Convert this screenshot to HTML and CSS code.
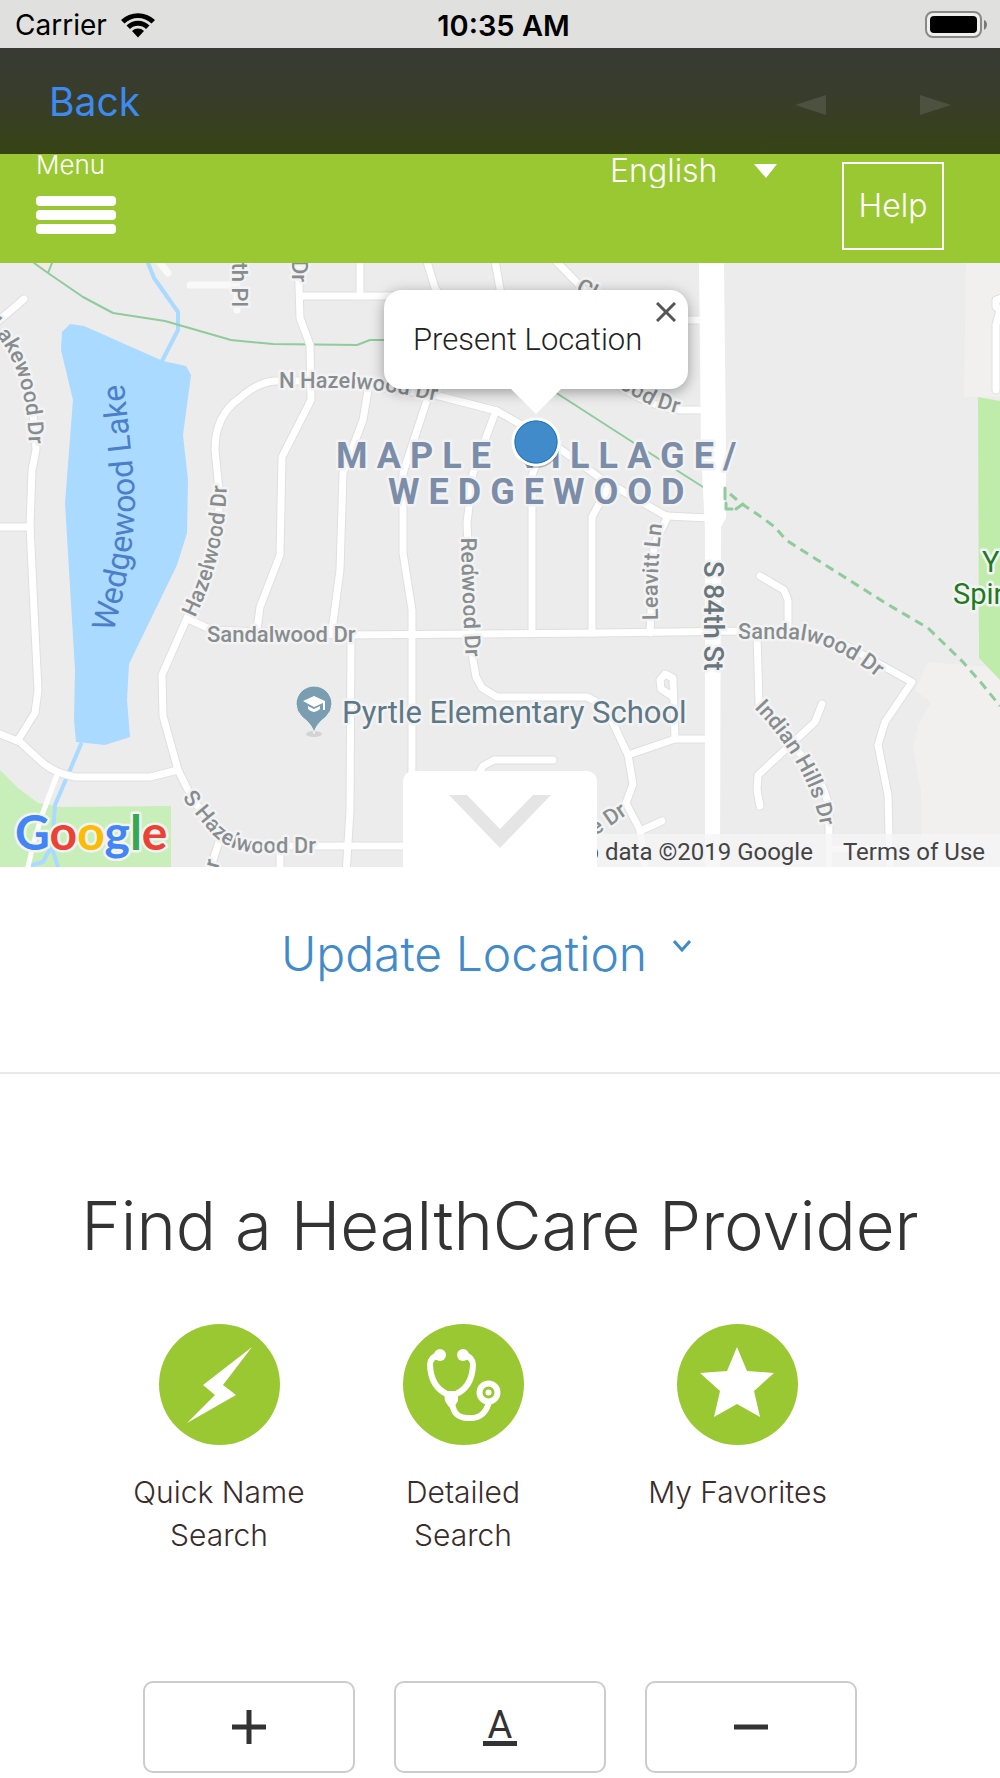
FILE: index.html
```html
<!DOCTYPE html>
<html lang="en">
<head>
    <meta charset="UTF-8">
    <meta name="viewport" content="width=device-width, initial-scale=1.0">
    <title>Find a HealthCare Provider</title>
    <link rel="stylesheet" href="styles.css">
</head>
<body>

    <div class="status-bar">
        <div class="carrier">
            <span>Carrier</span>
            <svg width="34" height="25" viewBox="0 0 34 25" aria-hidden="true">
                <path d="M0 7 A24.500 24.500 0 0 1 34 7 L30.500 10.500 A19.500 19.500 0 0 0 3.500 10.500 Z"/>
                <path d="M5.500 12.500 A16.500 16.500 0 0 1 28.500 12.500 L25 16 A11.500 11.500 0 0 0 9 16 Z"/>
                <path d="M11 18 A8.500 8.500 0 0 1 23 18 L17 24.500 Z"/>
            </svg>
        </div>
        <div class="clock">10:35 AM</div>
        <svg class="battery" width="63" height="28" viewBox="0 0 63 28" aria-hidden="true">
            <rect x="1" y="1" width="55" height="25" rx="7" fill="#efefed" stroke="#888" stroke-width="2"/>
            <rect x="5" y="5" width="47" height="17" rx="4"/>
            <path d="M59 9 Q62 10 62 14 Q62 17 59 19 Z" fill="#777"/>
        </svg>
    </div>

    <nav class="nav-bar">
        <a href="#" class="back">Back</a>
        <div class="history">
            <button type="button" aria-label="Previous page">
                <svg width="31" height="20" viewBox="0 0 31 20"><path d="M31 0 V20 L0 10 Z"/></svg>
            </button>
            <button type="button" aria-label="Next page">
                <svg width="31" height="20" viewBox="0 0 31 20"><path d="M0 0 V20 L31 10 Z"/></svg>
            </button>
        </div>
    </nav>

    <header class="site-header">
        <button type="button" class="menu">
            <span class="menu-label">Menu</span>
            <span class="bar"></span>
            <span class="bar"></span>
            <span class="bar"></span>
        </button>
        <div class="language">
            <select aria-label="Language">
                <option>English</option>
            </select>
            <svg width="23" height="14" viewBox="0 0 23 14" aria-hidden="true"><path d="M0 0 H23 L12 14 Z" fill="#fff"/></svg>
        </div>
        <a href="#" class="help">Help</a>
    </header>

    <div class="map">
        <svg class="map-drawing" viewBox="0 263 1000 604" role="img" aria-label="Map of Wedgewood">
            <defs>
                <!-- roads are drawn twice: grey casing, then white -->
                <g id="roads">
                    <path d="M-5 324 L24 299"/>
                    <path d="M-5 330 Q34 370 36 450 L32 470 L30 525 L33 590 L38 690 L35 713 L18 740"/>
                    <path d="M-5 527 H30"/>
                    <path d="M-5 732 L20 742 L43 763 Q55 773 75 777 H150 L178 770"/>
                    <path d="M497 411 L435 395 L370 386 L330 381 H275 Q258 382 240 398 Q215 415 215 450 L219 490 Q222 540 187 618 L162 675 L163 716 L178 770 L192 798 L222 840 Q240 846 270 846 H410"/>
                    <path d="M497 411 L545 438 L600 478 L666 516 L710 518"/>
                    <path d="M298 255 L300 318 L310 345 L311 400 L282 457 L280 555 L260 607 L257 630"/>
                    <path d="M300 296 H435 L450 310"/>
                    <path d="M360 255 V296"/>
                    <path d="M425 255 L435 288 L450 310"/>
                    <path d="M494 255 L502 300"/>
                    <path d="M550 255 L590 296 L640 320 H700"/>
                    <path d="M610 380 Q650 408 680 410 H710"/>
                    <path d="M368 390 L363 420 L343 473 L340 570 L332 630"/>
                    <path d="M427 400 L403 473 V553 L412 610 V760 L411 875"/>
                    <path d="M495 413 L473 473 L467 523 L473 660 L476 677 L482 688 L497 697 H587 L605 706 L628 755 L633 784 L626 803 L640 830 L646 875"/>
                    <path d="M542 450 L532 475 V633"/>
                    <path d="M610 484 L592 517 V633"/>
                    <path d="M668 516 L654 545 L650 633"/>
                    <path d="M188 619 L212 630 L345 635 L600 633 L745 631 L800 632 L845 645 L912 682 L885 722 L878 745 L888 795 L890 875"/>
                    <path d="M351 637 L350 810 L346 875"/>
                    <path d="M760 576 L784 590 L788 600 V630"/>
                    <path d="M757 634 L759 704 L795 748 Q829 784 829 815 V875"/>
                    <path d="M822 704 L815 722 L758 775 L757 790 L760 806"/>
                    <path d="M628 755 L675 739 H705"/>
                    <path d="M675 739 L673 678 L665 674 L660 680 L661 689 L672 696"/>
                    <path d="M478 775 L483 766 L494 760 H553"/>
                    <path d="M640 831 L662 821"/>
                    <path d="M219 842 L208 875"/>
                    <path d="M280 847 V875"/>
                    <path d="M830 849 H890"/>
                    <path d="M1002 298 L996 300 V307 L1000 310 L996 325 V390"/>
                </g>
                <path id="lakewood" d="M-12 326 Q30 365 29 460"/>
                <path id="lake" d="M113 633 Q135 555 135 495 Q130 435 120 350"/>
                <path id="nHazelwood" d="M279 388 H345 Q390 390 440 402"/>
                <path id="hazelwood" d="M195 618 Q228 550 227 470"/>
                <path id="leavitt" d="M658 620 Q656 565 664 510"/>
                <path id="ood" d="M604 380 L648 404 Q668 412 710 422"/>
                <path id="redwood" d="M461 538 Q462 600 467 680"/>
                <path id="sandalwood" d="M738 639 H790 Q835 641 885 684"/>
                <path id="indian" d="M754 708 Q825 782 823 860"/>
                <path id="sHazelwood" d="M182 798 L212 834 Q228 851 258 853 H350"/>
            </defs>

            <rect y="263" width="1000" height="604" fill="#ececec"/>
            <path fill="#f1f0ee" d="M966 263 H1000 V397 H964 Z M928 662 L1000 668 V867 H922 L921 790 L913 750 L918 725 L931 703 L915 690 Z"/>
            <path fill="#f7e9e4" d="M34 263 H52 L48 273 Z"/>
            <path fill="#bfecab" d="M978 397 L1000 401 V680 L979 658 Z"/>
            <path fill="#c8efba" d="M0 770 L18 788 L38 803 L60 807 L171 806 V867 H0 Z"/>
            <path class="water" d="M62 332 L70 324 L84 326 L163 361 L186 366 L191 375 L183 435 L188 480 L187 533 L177 565 L129 664 L127 700 L130 737 L105 745 L76 742 L74 720 L75 670 L69 570 L65 503 L73 400 L61 350 Z"/>
            <path class="stream" d="M148 263 L154 278 L178 312 V330 L162 361 M81 744 L70 770 L55 805 L52 845 L43 862 L32 865 M52 848 L58 867"/>
            <path class="trail" d="M34 263 L48 273 L83 297 L113 313 L165 321 L231 340 L273 344 L357 345 L370 340 H475 L558 394 L634 443 L703 487 M52 263 L48 273"/>
            <use href="#roads" class="casing"/>
            <path class="lane" d="M57 775 L42 815 L33 845 L28 867"/>
            <use href="#roads" class="road"/>
            <path class="minor" d="M160 263 L168 273 M190 285 H237 M237 286 V310"/>
            <path fill="#fff" d="M699 263 H724 L726 450 V518 L721 527 L720 867 H705 V530 L701 450 Z"/>
            <path class="trail dashed" d="M730 494 L742 504 L757 514 L775 527 L786 540 L830 568 L887 604 L928 628 L963 662 L983 685 L1000 706"/>
            <path class="trail heavy" d="M725 488 V499 M726 503 V509 H732 M736 509 L743 504"/>

            <g class="street">
                <text><textPath href="#lakewood">Lakewood Dr</textPath></text>
                <text><textPath href="#nHazelwood">N Hazelwood Dr</textPath></text>
                <text><textPath href="#hazelwood">Hazelwood Dr</textPath></text>
                <text><textPath href="#redwood">Redwood Dr</textPath></text>
                <text><textPath href="#leavitt">Leavitt Ln</textPath></text>
                <text><textPath href="#ood">wood Dr</textPath></text>
                <text><textPath href="#sandalwood">Sandalwood Dr</textPath></text>
                <text><textPath href="#indian">Indian Hills Dr</textPath></text>
                <text><textPath href="#sHazelwood">S Hazelwood Dr</textPath></text>
                <text x="207" y="642">Sandalwood Dr</text>
                <text transform="translate(232 250) rotate(90)">7th Pl</text>
                <text transform="translate(292 260) rotate(90)">Dr</text>
                <text text-anchor="end" transform="translate(628 814) rotate(-34)">e Dr</text>
                <text x="575" y="291" transform="rotate(28 575 291)">Ch</text>
                <text transform="translate(218 869) rotate(-75)">r</text>
            </g>
            <text class="avenue" transform="translate(704 561) rotate(90)">S 84th St</text>
            <text class="lake-name"><textPath href="#lake">Wedgewood Lake</textPath></text>
            <text class="area" x="336" y="468">MAPLE VILLAGE/</text>
            <text class="area" x="388" y="504">WEDGEWOOD</text>
            <g class="park">
                <text x="982" y="572">Y</text>
                <text x="953" y="604">Spin</text>
            </g>

            <!-- school pin -->
            <ellipse cx="314" cy="734" rx="8" ry="3" fill="#d3d3d3"/>
            <path d="M314 734 Q313 725 302 717 Q296 711 296 704 A18 18 0 0 1 332 704 Q332 711 326 717 Q315 725 314 734 Z" fill="#7a9db2" stroke="#f5f5f5"/>
            <path d="M303 701 L314 696 L325 701 V710 H323 V703 L314 707 Z M308 706 L314 709 L320 706 V709 Q314 715 308 709 Z" fill="#fff"/>
            <text class="school" x="342" y="723">Pyrtle Elementary School</text>

            <text class="logo" x="15" y="850"><tspan fill="#4285f4">G</tspan><tspan fill="#ea4335">o</tspan><tspan fill="#fbbc05">o</tspan><tspan fill="#4285f4">g</tspan><tspan fill="#34a853">l</tspan><tspan fill="#ea4335">e</tspan></text>

            <!-- present location -->
            <circle cx="537" cy="446" r="22" fill="#000" opacity="0.25"/>
            <circle cx="536" cy="442" r="23" fill="#428bca" stroke="#fff" stroke-width="3"/>
            <circle cx="536" cy="442" r="21" fill="#428bca" stroke="#1e76c4" stroke-width="1"/>
        </svg>

        <div class="bubble">
            Present Location
            <button type="button" class="close" aria-label="Close">
                <svg width="20" height="20" viewBox="0 0 20 20"><path d="M1 1 L19 19 M19 1 L1 19" stroke="#555" stroke-width="3"/></svg>
            </button>
        </div>
        <div class="attribution">
            <span>Map data ©2019 Google</span>
            <a href="#">Terms of Use</a>
        </div>
        <button type="button" class="collapse" aria-label="Hide map">
            <svg width="104" height="53" viewBox="0 0 104 53"><path d="M1 0 H19 L52 34 L85 0 H103 L52 53 Z" fill="#e5e5e5"/></svg>
        </button>
    </div>

    <section class="update">
        <a href="#">Update Location
            <svg width="18" height="12" viewBox="0 0 18 12" aria-hidden="true"><path d="M1 1 L9 10 L17 1" fill="none" stroke="#428bca" stroke-width="3"/></svg>
        </a>
    </section>

    <main>
        <h1>Find a HealthCare Provider</h1>

        <div class="searches">
            <a href="#">
                <svg width="121" height="121" viewBox="0 0 121 121" aria-hidden="true">
                    <circle cx="60.500" cy="60.500" r="60.500"/>
                    <path d="M93 23 L64 61 L77 71 L28 99 L56 71 L44 61 Z" fill="#fff"/>
                </svg>
                Quick Name<br>Search
            </a>
            <a href="#">
                <svg width="121" height="121" viewBox="0 0 121 121" aria-hidden="true">
                    <circle cx="60.500" cy="60.500" r="60.500"/>
                    <g fill="none" stroke="#fff" stroke-width="6">
                        <path d="M36 31 Q27 33 27 41 Q28 63 44 70 H53 Q69 63 70 41 Q70 33 61 31"/>
                        <path d="M49 78 C50 90 56 94 65 94 C77 95 83 89 86 78"/>
                        <circle cx="85.500" cy="68.500" r="9"/>
                    </g>
                    <path d="M41 68 H55 V77 L51 83 H46 L42 77 Z" fill="#fff"/>
                    <g fill="#fff">
                        <circle class="white" cx="37" cy="31" r="6"/>
                        <circle class="white" cx="60" cy="31" r="6"/>
                        <circle class="white" cx="85.500" cy="68.500" r="3"/>
                    </g>
                </svg>
                Detailed<br>Search
            </a>
            <a href="#">
                <svg width="121" height="121" viewBox="0 0 121 121" aria-hidden="true">
                    <circle cx="60.500" cy="60.500" r="60.500"/>
                    <path d="M60 23 L70 47 L97 49 L77 67 L83 93 L60 80 L37 93 L43 67 L23 49 L50 47 Z" fill="#fff"/>
                </svg>
                My Favorites
            </a>
        </div>

        <div class="text-size">
            <button type="button" aria-label="Larger text">
                <svg width="34" height="34" viewBox="0 0 34 34"><path d="M0 17 H34 M17 0 V34"/></svg>
            </button>
            <button type="button" aria-label="Default text size"><span class="letter">A</span></button>
            <button type="button" aria-label="Smaller text">
                <svg width="34" height="34" viewBox="0 0 34 34"><path d="M0 17 H34"/></svg>
            </button>
        </div>
    </main>

</body>
</html>
```
FILE: styles.css
```css
* {
    box-sizing: border-box;
}

body {
    margin: 0;
    font-family: Inter, "Liberation Sans", sans-serif;
    font-weight: 300;
    color: #333;
    background-color: #fff;
    overflow-x: hidden;
}

a {
    text-decoration: none;
}

button {
    padding: 0;
    border: none;
    background: none;
    font: inherit;
    color: inherit;
    cursor: pointer;
}

svg {
    display: block;
}

/* Phone status bar */
.status-bar {
    display: grid;
    grid-template-columns: 1fr auto 1fr;
    align-items: center;
    height: 48px;
    padding: 2px 12px 0 15px;
    background-color: #e0e1de;
    color: #000;
    font-size: 28px;
    font-weight: 400;
}

.carrier {
    display: flex;
    align-items: center;
    gap: 14px;
}

.clock {
    padding-left: 4px;
    font-size: 29px;
    font-weight: 600;
}

.battery {
    justify-self: end;
}

/* Browser bar */
.nav-bar {
    display: flex;
    align-items: center;
    justify-content: space-between;
    height: 106px;
    padding: 0 49px;
    background: linear-gradient(#383a33, #383d2a 50%, #364414);
}

.back {
    color: #3d8af0;
    font-size: 39px;
    font-weight: 400;
}

.history {
    display: flex;
    gap: 94px;
    padding-top: 8px;
    fill: #4c5140;
}

/* Green header */
.site-header {
    display: flex;
    align-items: flex-start;
    height: 109px;
    padding: 0 56px 0 36px;
    background-color: #9ac832;
    color: #fff;
    font-size: 32px;
}

.menu {
    display: flex;
    flex-direction: column;
    gap: 4px;
    width: 80px;
    margin-right: auto;
    text-align: left;
}

.menu-label {
    height: 38px;
    font-size: 26px;
    line-height: 22px;
}

.bar {
    height: 10px;
    border-radius: 4px;
    background-color: #fff;
}

.language {
    display: flex;
    align-items: center;
    gap: 36px;
    margin-right: 65px;
}

.language select {
    appearance: none;
    padding: 0;
    border: none;
    background: none;
    color: #fff;
    font: inherit;
    line-height: 34px;
}

.help {
    width: 102px;
    margin-top: 8px;
    border: 2px solid #fff;
    color: #fff;
    line-height: 84px;
    text-align: center;
}

/* Map */
.map {
    position: relative;
    font-family: Roboto, sans-serif;
}

.map-drawing {
    width: 100%;
}

.casing,
.road,
.lane,
.minor,
.stream,
.trail {
    fill: none;
    stroke-linecap: round;
    stroke-linejoin: round;
}

.casing {
    stroke: #dfdfdf;
    stroke-width: 9;
}

.road {
    stroke: #fff;
    stroke-width: 7;
}

.lane {
    stroke: #fff;
    stroke-width: 5;
}

.minor {
    stroke: #f9f9f9;
    stroke-width: 7;
}

.water {
    fill: #aadaff;
}

.stream {
    stroke: #aadaff;
    stroke-width: 4;
}

.trail {
    stroke: #8fcb9b;
    stroke-width: 2;
}

.dashed {
    stroke-width: 3;
    stroke-dasharray: 9 6;
    stroke-linecap: butt;
}

.heavy {
    stroke-width: 3;
}

.map-drawing text {
    stroke: #f3f3f3;
    stroke-width: 5;
    stroke-linejoin: round;
    paint-order: stroke;
}

.street {
    fill: #878d8f;
    font-size: 22px;
    font-weight: 500;
}

.avenue {
    fill: #69767c;
    font-size: 27px;
    font-weight: 500;
}

.map-drawing .lake-name {
    fill: #4d7fc9;
    stroke: none;
    font-size: 32px;
    font-weight: 400;
}

.area {
    fill: #7b8da8;
    font-size: 36px;
    font-weight: 700;
    letter-spacing: 9px;
}

.park {
    fill: #1d7a1f;
    font-size: 29px;
    font-weight: 400;
}

.school {
    fill: #5d7886;
    font-size: 31px;
    font-weight: 400;
}

.logo {
    font-family: Lato, sans-serif;
    font-size: 48px;
    font-weight: 700;
}

.bubble {
    position: absolute;
    bottom: 79%;
    left: 536px;
    width: 304px;
    margin: 0 0 1px -152px;
    border-radius: 18px;
    background-color: #fff;
    box-shadow: 0 3px 14px rgba(0, 0, 0, 0.35);
    font-size: 31px;
    line-height: 99px;
    padding-left: 29px;
    color: #222;
}

.bubble::after {
    content: "";
    position: absolute;
    top: 100%;
    left: 50%;
    margin-left: -25px;
    border: 25px solid transparent;
    border-top-color: #fff;
    border-bottom: none;
}

.close {
    position: absolute;
    top: 12px;
    right: 12px;
}

.attribution {
    position: absolute;
    right: 0;
    bottom: 0;
    display: flex;
    gap: 30px;
    padding: 3px 15px 0;
    background-color: rgba(245, 245, 245, 0.8);
    color: #444;
    font-size: 24px;
    font-weight: 400;
    line-height: 30px;
}

.attribution a {
    color: inherit;
}

.collapse {
    position: absolute;
    bottom: 0;
    left: 50%;
    display: flex;
    justify-content: center;
    width: 194px;
    margin-left: -97px;
    padding: 24px 0 19px;
    border-radius: 10px 10px 0 0;
    background-color: #fff;
}

/* Location link */
.update {
    padding: 47px 0 78px;
    border-bottom: 2px solid #e9e9e9;
    font-size: 48px;
    line-height: 80px;
}

.update a {
    display: flex;
    justify-content: center;
    gap: 26px;
    color: #428bca;
    padding-right: 28px;
}

.update svg {
    margin-top: 26px;
}

/* Search choices */
h1 {
    margin: 108px 0 54px;
    font-size: 67px;
    font-weight: 300;
    line-height: 88px;
    text-align: center;
}

.searches {
    display: grid;
    grid-template-columns: 4fr 4fr 5fr;
    min-height: 357px;
    padding: 0 110px 0 97px;
    font-size: 30px;
    line-height: 43px;
    text-align: center;
}

.searches a {
    color: #3b2c2c;
}

.searches svg {
    margin: 0 auto 26px;
    fill: #9ac832;
}

.searches .white {
    fill: #fff;
}

/* Text size buttons */
.text-size {
    display: grid;
    grid-template-columns: repeat(3, 1fr);
    gap: 39px;
    padding: 0 143px 5px;
}

.text-size button {
    display: flex;
    align-items: center;
    justify-content: center;
    height: 92px;
    border: 2px solid #ccc;
    border-radius: 10px;
}

.text-size svg {
    stroke: #333;
    stroke-width: 5;
}

.letter {
    width: 34px;
    border-bottom: 5px solid #333;
    font-family: Roboto, sans-serif;
    font-size: 38px;
    font-weight: 400;
    line-height: 32px;
}
```
